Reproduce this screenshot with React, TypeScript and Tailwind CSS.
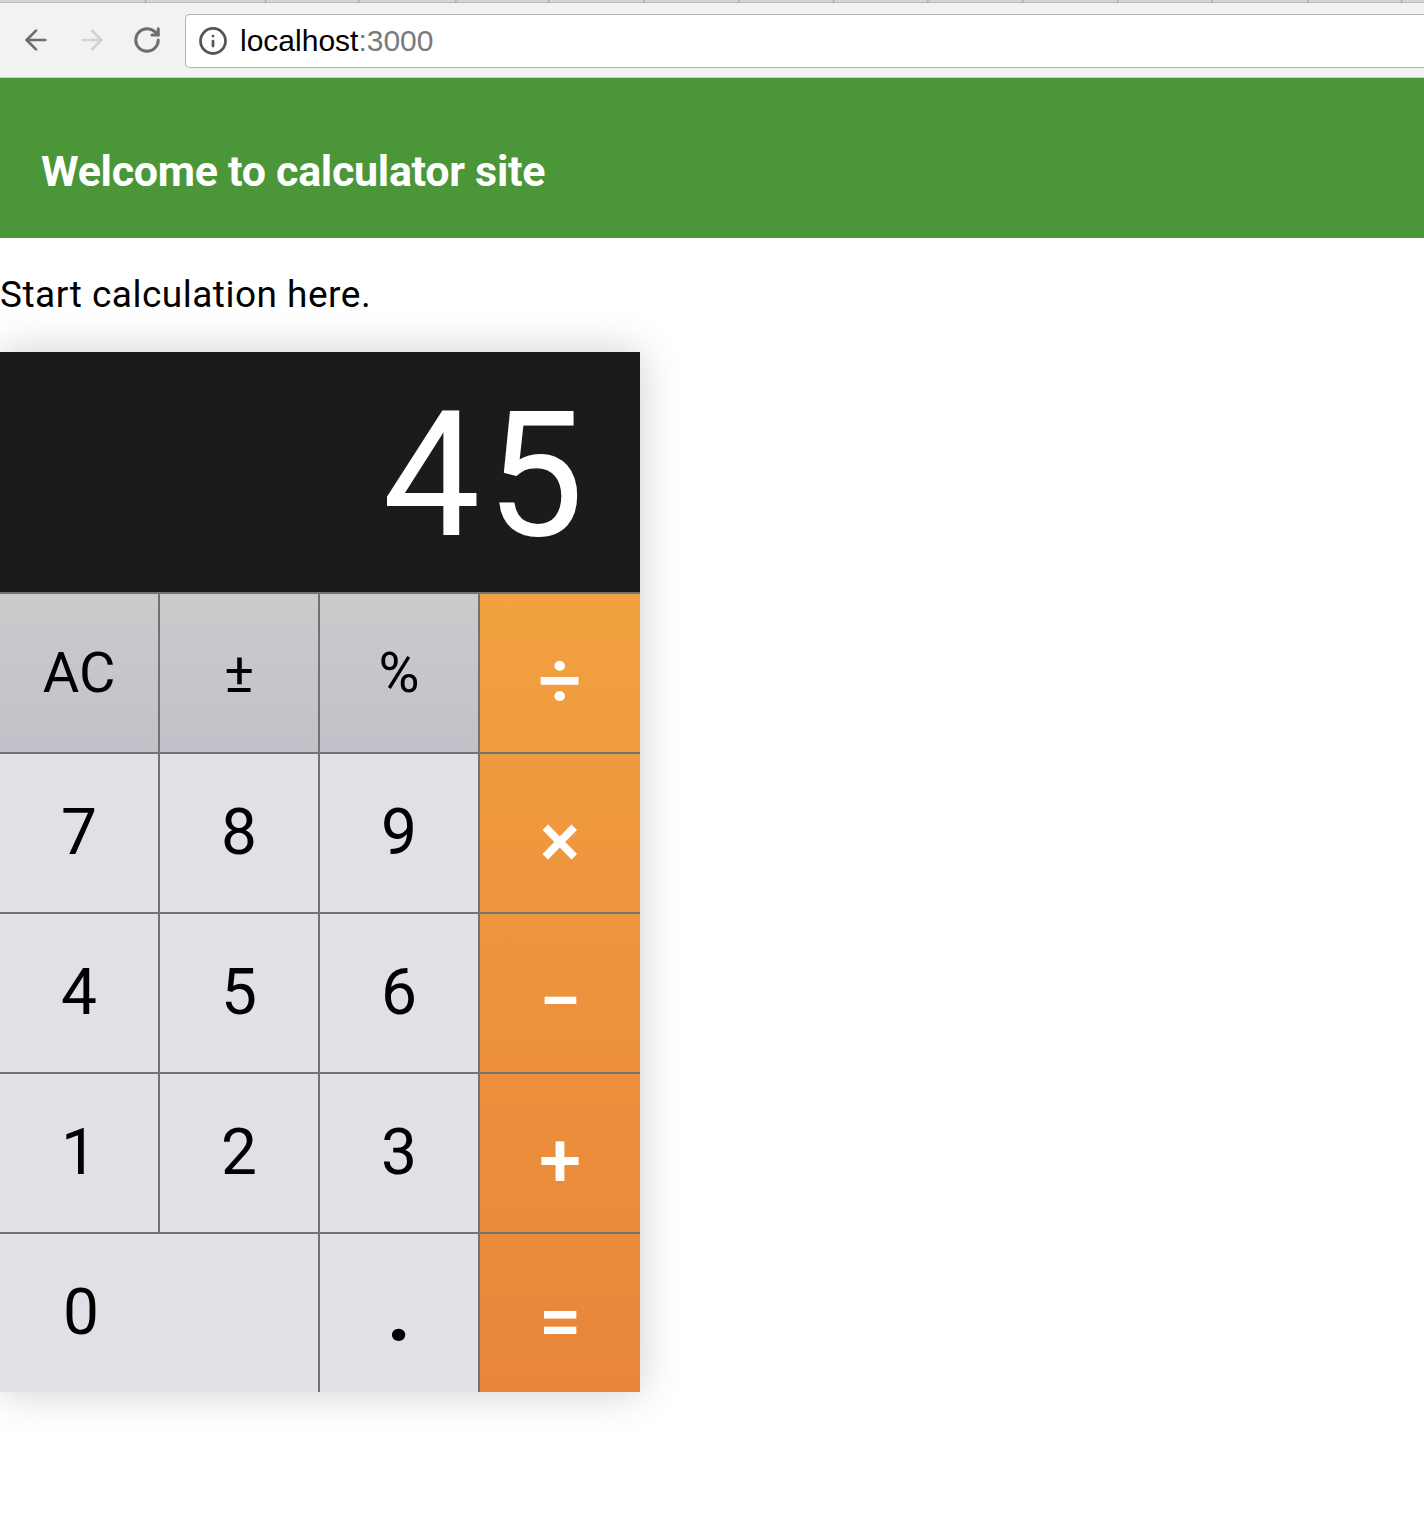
import React from "react";
import { ArrowLeft, ArrowRight, RotateCw, Info } from "lucide-react";

const tabEdges = [145, 265, 358, 455, 548, 643, 738, 833, 927, 1022, 1117, 1211, 1307, 1401];

const BrowserBar: React.FC = () => {
  return (
    <div className="h-[78px] flex flex-col">
      <div className="relative h-[3px] bg-[#d4d4d4] border-b border-[#b9b9b9]">
        {tabEdges.map((x) => (
          <span
            key={x}
            className="absolute top-0 h-[3px] w-px bg-[#9c9c9c] -skew-x-[30deg]"
            style={{ left: x }}
          />
        ))}
      </div>
      <div className="flex-1 flex items-center bg-[#f2f2f2] border-b border-[#cfcfcf]">
        <div className="w-[185px] flex items-center pl-[20px] gap-[24px]">
          <ArrowLeft size={32} strokeWidth={2} className="text-[#6e6e6e]" />
          <ArrowRight size={32} strokeWidth={2} className="text-[#d2d2d2]" />
          <RotateCw size={30} strokeWidth={2.4} className="text-[#6e6e6e]" />
        </div>
        <div className="flex-1 h-[54px] mt-[1px] flex items-center gap-[12px] pl-[12px] bg-white border border-r-0 border-[#b3b3b3] rounded-l-[5px]">
          <Info size={30} strokeWidth={2.2} className="text-[#555]" />
          <span className="font-['Liberation_Sans',sans-serif] text-[30px] leading-none text-black">
            localhost<span className="text-[#7a7a7a]">:3000</span>
          </span>
        </div>
      </div>
    </div>
  );
};

interface KeyProps {
  label: string;
  kind: "fn" | "digit" | "op";
  bg?: string;
  wide?: boolean;
  dot?: boolean;
}

const Key: React.FC<KeyProps> = ({ label, kind, bg, wide, dot }) => {
  const base = "h-[160px] border-t-2 border-[#727272] flex items-center";
  if (kind === "op") {
    return (
      <button className={`${base} ${bg} justify-center pt-[16px] text-white text-[76px] font-medium`}>
        {label}
      </button>
    );
  }
  const look =
    kind === "fn"
      ? "bg-gradient-to-b from-[#cbcbcd] to-[#c2c1c9] text-[56px] font-normal"
      : dot
        ? "bg-[#e0e0e6] text-[84px] font-bold"
        : "bg-[#e0e0e6] text-[64px] font-normal";
  return (
    <button
      className={`${base} border-r-2 ${look} ${wide ? "col-span-2 justify-start pl-[63px]" : "justify-center"} text-black`}
    >
      {label}
    </button>
  );
};

const Calculator: React.FC = () => {
  return (
    <div className="w-[640px] shadow-[0_0_40px_rgba(0,0,0,0.2)] font-['Roboto',sans-serif]">
      <div className="h-[240px] bg-[#1c1a1d] flex items-center justify-end pt-[8px] pr-[50px]">
        <span className="text-white text-[174px] font-normal leading-none tracking-[6px]">45</span>
      </div>
      <div className="grid grid-cols-4">
        <Key label="AC" kind="fn" />
        <Key label="±" kind="fn" />
        <Key label="%" kind="fn" />
        <Key label="÷" kind="op" bg="bg-gradient-to-b from-[#f1a140] to-[#ef9b3e]" />

        <Key label="7" kind="digit" />
        <Key label="8" kind="digit" />
        <Key label="9" kind="digit" />
        <Key label="×" kind="op" bg="bg-gradient-to-b from-[#ef9a3e] to-[#ee953d]" />

        <Key label="4" kind="digit" />
        <Key label="5" kind="digit" />
        <Key label="6" kind="digit" />
        <Key label="−" kind="op" bg="bg-gradient-to-b from-[#ee953d] to-[#ec903c]" />

        <Key label="1" kind="digit" />
        <Key label="2" kind="digit" />
        <Key label="3" kind="digit" />
        <Key label="+" kind="op" bg="bg-gradient-to-b from-[#ec903c] to-[#ea8b3b]" />

        <Key label="0" kind="digit" wide />
        <Key label="." kind="digit" dot />
        <Key label="=" kind="op" bg="bg-gradient-to-b from-[#ea8b3b] to-[#e8853a]" />
      </div>
    </div>
  );
};

export default function App() {
  return (
    <div className="min-h-screen bg-white font-['Roboto',sans-serif]">
      <BrowserBar />
      <header className="h-[160px] bg-[#4a9638] pt-[72px] px-[41px]">
        <h1 className="text-white text-[43px] font-bold leading-none tracking-[-0.3px]">
          Welcome to calculator site
        </h1>
      </header>
      <p className="mt-[38px] text-[37px] leading-none tracking-[0.5px] text-black">Start calculation here.</p>
      <div className="mt-[39px]">
        <Calculator />
      </div>
    </div>
  );
}
